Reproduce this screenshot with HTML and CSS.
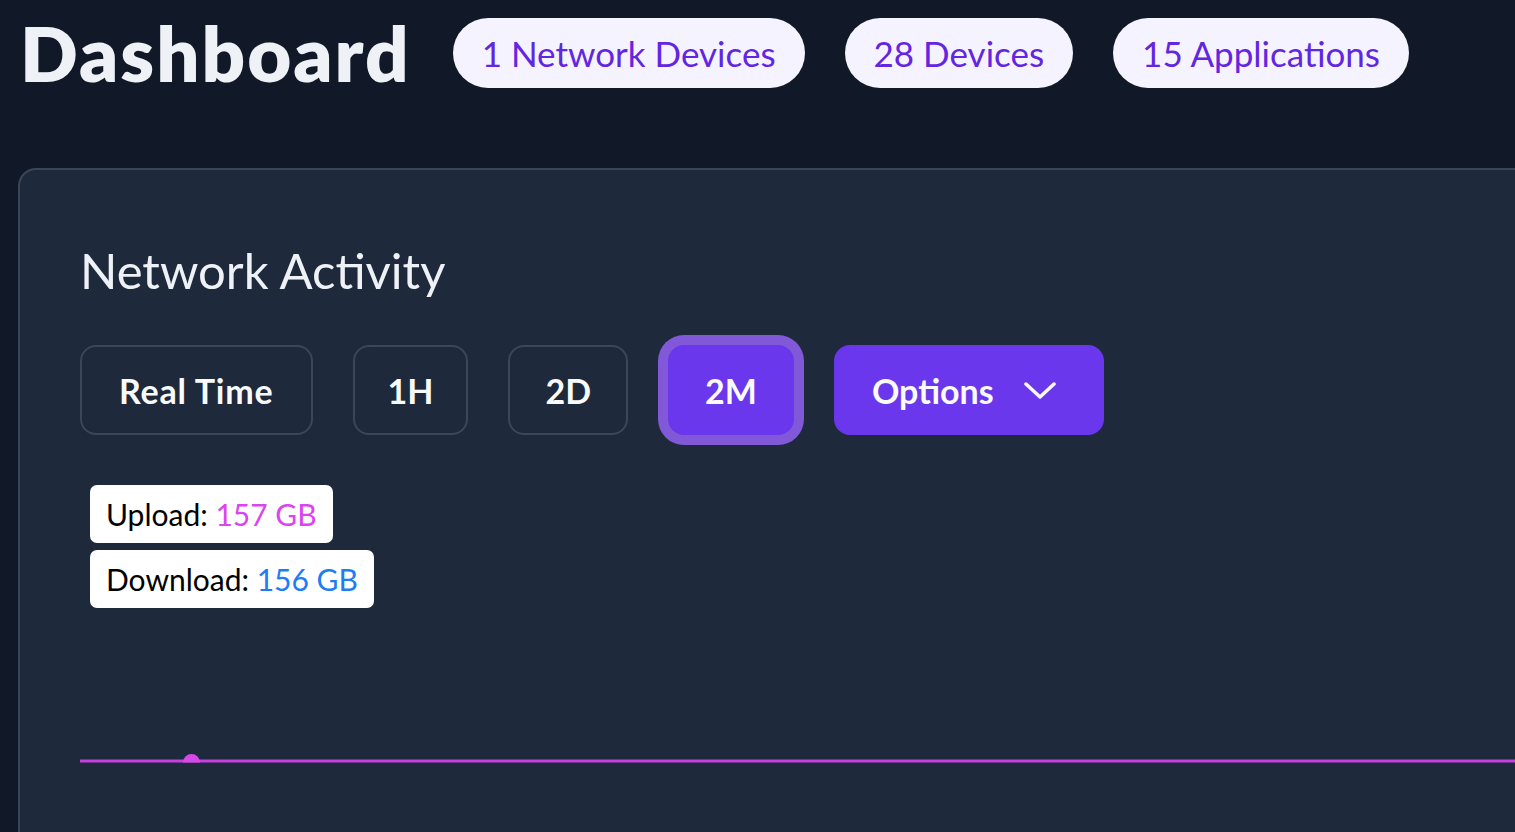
FILE: index.html
```html
<!DOCTYPE html>
<html lang="en">
<head>
    <meta charset="UTF-8">
    <meta name="viewport" content="width=device-width, initial-scale=1.0">
    <title>Dashboard</title>
    <link rel="stylesheet" href="styles.css">
</head>
<body>

    <div class="header">
        <h1>Dashboard</h1>
        <div class="stats">
            <span class="pill">1 Network Devices</span>
            <span class="pill">28 Devices</span>
            <span class="pill">15 Applications</span>
        </div>
    </div>

    <div class="card">
        <h2>Network Activity</h2>

        <div class="ranges">
            <button class="range wide">Real Time</button>
            <button class="range short">1H</button>
            <button class="range">2D</button>
            <button class="range active">2M</button>
            <button class="options">
                Options
                <svg width="32" height="20" viewBox="0 0 32 20" fill="none" stroke="currentColor" stroke-width="3.5" stroke-linecap="round" stroke-linejoin="round">
                    <path d="M2 3 L16 16 L30 3"/>
                </svg>
            </button>
        </div>

        <div class="chart">
            <div class="tooltip">
                <div class="tip-row">Upload: <span class="upload">157 GB</span></div>
                <div class="tip-row">Download: <span class="download">156 GB</span></div>
            </div>
            <svg class="plot" width="1500" height="320" viewBox="0 0 1500 320">
                <defs>
                    <clipPath id="above">
                        <rect x="0" y="0" width="1500" height="287.5"/>
                    </clipPath>
                </defs>
                <line x1="0" y1="286" x2="1500" y2="286" stroke="#c93ee2" stroke-width="3"/>
                <circle cx="111.5" cy="287.5" r="8.5" fill="#d44ae6" clip-path="url(#above)"/>
            </svg>
        </div>
    </div>

</body>
</html>
```

FILE: styles.css
```css
body {
    font-family: Lato, "Open Sans", sans-serif;
    background-color: #111827;
    margin: 0;
    padding: 0;
    overflow: hidden;
    color: #f1f5f9;
}
.header {
    display: flex;
    align-items: center;
    padding: 18px 0 0 20px;
}
h1 {
    margin: 0 42px 0 0;
    font-size: 76px;
    font-weight: 800;
    color: #eef2f6;
    letter-spacing: 2px;
    line-height: 70px;
}
.stats {
    display: flex;
    gap: 40px;
}
.pill {
    background: #f5f3ff;
    color: #6326e0;
    font-size: 35px;
    line-height: 70px;
    height: 70px;
    padding: 0 29px;
    border-radius: 35px;
}
/* Network activity card */
.card {
    margin: 80px 0 0 18px;
    width: 1600px;
    height: 700px;
    background: #1e293b;
    border: 2px solid #3a4557;
    border-radius: 18px;
    padding: 68px 0 0 60px;
    box-sizing: border-box;
}
.card h2 {
    margin: 0;
    font-size: 49px;
    font-weight: 400;
    line-height: 64px;
    color: #eef2f6;
}
.ranges {
    display: flex;
    align-items: center;
    gap: 40px;
    margin-top: 43px;
}
.range,
.options {
    font-family: inherit;
    font-size: 34px;
    font-weight: 700;
    color: #f8fafc;
    height: 90px;
    padding: 0 35px;
    border: 2px solid #3b4658;
    border-radius: 16px;
    background: transparent;
    cursor: pointer;
}
.range.wide {
    padding: 0 37px;
    letter-spacing: 0.8px;
}
.range.short {
    padding: 0 33px;
}
.range.active {
    background: #6a37ec;
    border-color: #6a37ec;
    box-shadow: 0 0 0 10px #8158d8;
}
.options {
    display: flex;
    align-items: center;
    gap: 30px;
    background: #6a37ec;
    border-color: #6a37ec;
    padding-left: 36px;
    padding-right: 46px;
}
.options svg {
    margin-top: 2px;
}
/* Chart */
.chart {
    position: relative;
    margin-top: 40px;
}
.plot {
    display: block;
}
.tooltip {
    position: absolute;
    top: 10px;
    left: 10px;
    display: flex;
    flex-direction: column;
    align-items: flex-start;
    gap: 7px;
}
.tip-row {
    background: #fff;
    color: #000;
    font-size: 30px;
    line-height: 58px;
    padding: 0 16px;
    border-radius: 7px;
}
.upload {
    color: #d946ef;
}
.download {
    color: #1e7cf4;
}
```
